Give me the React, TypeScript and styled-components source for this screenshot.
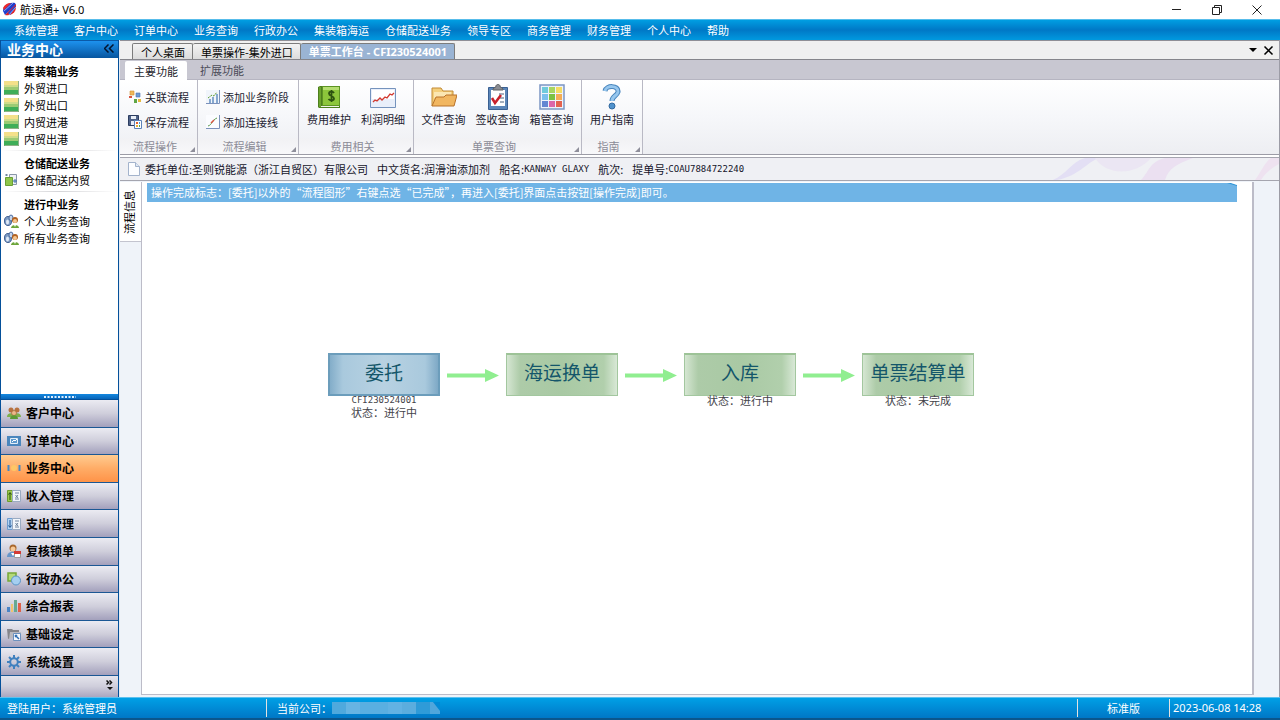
import React from 'react';
import styled, { createGlobalStyle, css } from 'styled-components';

const GlobalStyle = createGlobalStyle`
  * { box-sizing: border-box; }
  body { margin: 0; background: #fff; }
  body, button {
    font-family: 'Noto Sans CJK SC', 'Noto Sans', sans-serif;
    font-size: 11px;
    line-height: 16px;
    color: #000;
  }
  button { margin: 0; padding: 0; border: 0; background: none; white-space: nowrap; cursor: pointer; }
  svg { display: block; flex: none; }
`;

const Shell = styled.div`
  display: flex;
  flex-direction: column;
  min-height: 100vh;
`;

/* ---------- window title and menu ---------- */

const TitleBar = styled.header`
  display: flex;
  align-items: center;
  height: 19px;
  padding: 0 3px 0 2px;
  gap: 3px;
`;

const AppTitle = styled.h1`
  flex: 1;
  margin: 0;
  font-family: 'Noto Sans', 'Noto Sans CJK SC', sans-serif;
  font-size: 11px;
  font-weight: 400;
`;

const WindowButton = styled.button`
  display: flex;
  align-items: center;
  justify-content: center;
  width: 40px;
  height: 18px;
`;

const WindowButtons = styled.div`
  display: flex;
`;

const MenuBar = styled.nav`
  display: flex;
  align-items: center;
  height: 21px;
  padding-left: 6px;
  border-top: 1px solid #58bdeb;
  background: linear-gradient(#009ee2, #0078c6 50%, #0099df);
`;

const MenuItem = styled.button`
  padding: 0 8px;
  color: #fff;
`;

const Body = styled.div`
  display: flex;
  flex: 1;
`;

/* ---------- sidebar ---------- */

const Sidebar = styled.aside`
  display: flex;
  flex-direction: column;
  flex: none;
  width: 119px;
  border: solid #04509a;
  border-width: 0 1px;
`;

const SideHeader = styled.div`
  display: flex;
  align-items: center;
  justify-content: space-between;
  height: 18px;
  padding: 0 4px 2px 6px;
  border-top: 1px solid #0a5aa8;
  background: linear-gradient(#1d92ee, #07559f);
`;

const SideTitle = styled.h2`
  margin: 0;
  font-size: 14px;
  font-weight: 700;
  color: #fff;
`;

const SideList = styled.div`
  flex: 1;
  padding-top: 5px;
`;

const SideGroup = styled.section`
  & + &::before {
    content: '';
    display: block;
    height: 1px;
    margin: 3px 0 4px;
    background: linear-gradient(90deg, #fff, #d5d5d8 50%, #fff);
  }
`;

const SideHeading = styled.h3`
  margin: 0;
  padding-left: 23px;
  font-size: 11px;
  font-weight: 700;
`;

const SideLink = styled.button`
  display: flex;
  align-items: center;
  gap: 5px;
  width: 100%;
  height: 17px;
  padding-left: 3px;
`;

const Splitter = styled.div`
  display: flex;
  justify-content: center;
  height: 6px;
  padding-top: 2px;
  border-bottom: 1px solid #04509a;
  background: linear-gradient(#1488e0, #0764b8);
`;

const NavStack = styled.div`
  display: grid;
  grid-auto-rows: 1fr;
  height: 276px;
`;

const NavButton = styled.button<{ $active?: boolean }>`
  display: flex;
  align-items: center;
  gap: 5px;
  padding-left: 6px;
  border-bottom: 1px solid #1b5794;
  font-size: 12px;
  font-weight: 700;
  background: linear-gradient(#ebebf2, #cfcedb 50%, #a3a0bc);
  ${p => p.$active && css`background: linear-gradient(#ffcb90, #ffac66 50%, #ff9348);`}
`;

const NavOverflow = styled.div`
  display: flex;
  justify-content: flex-end;
  height: 21px;
  padding: 4px 5px 0 0;
  background: linear-gradient(#e4e4ec, #cfcedb 50%, #a9a6c0);
`;

/* ---------- workspace ---------- */

const Main = styled.main`
  display: flex;
  flex-direction: column;
  flex: 1;
  min-width: 0;
  border-left: 1px solid #e6ebf2;
  border-right: 1px solid #9c9ca6;
`;

const DocTabs = styled.div`
  display: flex;
  align-items: flex-end;
  height: 20px;
  padding: 0 5px 0 12px;
  border-top: 1px solid #8f8f96;
  border-bottom: 1px solid #85858b;
  background: #f0f0f0;
`;

const DocTab = styled.button<{ $active?: boolean }>`
  height: 16px;
  padding: 0 7px 0 8px;
  line-height: 14px;
  border: 1px solid #7c7c7c;
  border-bottom: 0;
  border-left-width: 0;
  border-radius: 2px 2px 0 0;
  background: linear-gradient(#f3f3f3, #dcdcdc);
  &:first-child { border-left-width: 1px; }
  ${p => p.$active && css`
    background: #9ab4d4;
    color: #fff;
    font-weight: 700;
    font-family: 'Noto Sans', 'Noto Sans CJK SC', sans-serif;
  `}
`;

const DocTools = styled.div`
  display: flex;
  align-items: center;
  gap: 6px;
  height: 18px;
  margin-left: auto;
  button { display: flex; }
`;

const RibbonTabs = styled.div`
  display: flex;
  align-items: flex-end;
  height: 20px;
  padding-left: 5px;
  border-bottom: 1px solid #b6b5c1;
  background: #c8c7d1;
`;

const RibbonTab = styled.button<{ $active?: boolean }>`
  height: 18px;
  padding: 0 9px;
  color: #4b4b58;
  ${p => p.$active && css`
    height: 19px;
    margin-bottom: -1px;
    margin-right: 4px;
    border-radius: 2px 2px 0 0;
    background: #fff;
    color: #1d1d2c;
  `}
`;

const Ribbon = styled.div`
  display: flex;
  height: 75px;
  border-bottom: 1px solid #9c9ca6;
  background: linear-gradient(#fff, #f6f7fa 50%, #edeef2);
`;

const RibbonGroup = styled.section<{ $width: number }>`
  display: flex;
  flex-direction: column;
  flex: none;
  width: ${p => p.$width}px;
  border-right: 1px solid #b9b9c4;
`;

const RibbonItems = styled.div<{ $small?: boolean }>`
  display: flex;
  flex: 1;
  justify-content: ${p => (p.$small ? 'flex-start' : 'center')};
  ${p => p.$small && css`
    flex-direction: column;
    gap: 9px;
    padding: 9px 0 0 8px;
  `}
`;

const RibbonLabel = styled.div`
  display: flex;
  align-items: flex-end;
  height: 16px;
  color: #8b8b96;
  background: linear-gradient(#f1f1f4, #f8f8fa);
  span { flex: 1; text-align: center; }
  svg { margin: 0 2px 2px 0; }
`;

const SmallTool = styled.button`
  display: flex;
  align-items: center;
  gap: 3px;
  color: #1b1b30;
`;

const LargeTool = styled.button`
  display: flex;
  flex-direction: column;
  align-items: center;
  gap: 1px;
  width: 54px;
  padding-top: 4px;
  color: #1b1b30;
`;

const InfoBar = styled.div`
  display: flex;
  align-items: center;
  gap: 9px;
  height: 24px;
  margin-top: 2px;
  padding-left: 8px;
  border-top: 1px solid #a5a5af;
  border-bottom: 1px solid #a5a5af;
  background: #eff0f4;
  white-space: nowrap;
`;

const InfoItem = styled.span`
  display: flex;
  align-items: center;
  height: 16px;
  color: #14142a;
  &:first-of-type { margin-left: -4px; }
`;

const Mono = styled.span`
  font-family: 'DejaVu Sans Mono', monospace;
  font-size: 9px;
  line-height: 12px;
`;

const InfoArt = styled.svg`
  margin-left: auto;
`;

const Work = styled.div`
  display: flex;
  flex: 1;
  padding: 1px 25px 2px 0;
  background: #eff3f9;
`;

const SideTabs = styled.div`
  flex: none;
  width: 21px;
`;

const SideTab = styled.button`
  display: flex;
  align-items: center;
  justify-content: center;
  width: 21px;
  height: 60px;
  padding-right: 4px;
  background: #fff;
  border-bottom: 1px solid #c3c4cf;
  span { writing-mode: vertical-rl; text-orientation: sideways; transform: rotate(180deg); }
`;

const Canvas = styled.div`
  flex: 1;
  min-width: 0;
  padding: 1px 15px 0 5px;
  border: solid #bcbcc8;
  border-width: 0 2px 1px 1px;
  background: #fff;
`;

const Banner = styled.div`
  display: flex;
  justify-content: space-between;
  height: 19px;
  padding-left: 4px;
  line-height: 18px;
  color: #fff;
  background: #6fb4e6;
`;

const Flow = styled.div`
  display: flex;
  align-items: flex-start;
  gap: 7px;
  padding: 151px 0 0 181px;
`;

const Step = styled.div`
  flex: none;
  width: 112px;
  text-align: center;
`;

const StepBox = styled.button<{ $current?: boolean }>`
  display: block;
  width: 100%;
  height: 43px;
  padding-bottom: 6px;
  font-size: 19px;
  font-weight: 400;
  color: #14566a;
  border: 1px solid #a3c79f;
  border-top: 2px solid #9dc397;
  background: linear-gradient(90deg, #d5e6d2, #adcba8 12%, #a9c9a4 50%, #b1cfac 88%, #d8e8d6);
  ${p => p.$current && css`
    border: 2px solid #6c9dbb;
    background: linear-gradient(90deg, #83adc9, #a9c9dd 12%, #b8d2e2 50%, #a9c9dd 88%, #7ea9c6);
  `}
`;

const StepNote = styled.div`
  display: flex;
  flex-direction: column;
  align-items: center;
  margin-top: -2px;
  line-height: 12px;
  color: #44444a;
`;

const Arrow = styled.svg`
  margin-top: 16px;
`;

/* ---------- status bar ---------- */

const StatusBar = styled.footer`
  display: flex;
  align-items: center;
  height: 23px;
  border-top: 1px solid #5cc0ee;
  border-bottom: 2px solid #0b568c;
  background: linear-gradient(#00a0e6, #0077c6);
  color: #fff;
`;

const StatusCell = styled.div<{ $width?: number; $pad: number }>`
  display: flex;
  align-items: center;
  height: 18px;
  padding-left: ${p => p.$pad}px;
  ${p => (p.$width ? css`flex: none; width: ${p.$width}px;` : css`flex: 1;`)}
  & + & { border-left: 1px solid #e2e2e2; }
`;

const Clock = styled.time`
  font-family: 'Noto Sans', sans-serif;
`;

/* ---------- icons ---------- */

const Logo = () => (
  <svg width="15" height="15" viewBox="0 0 15 15">
    <path d="M1 9C1 4 6 0 13 1l1 2L3 13z" fill="#1d3fd0" />
    <path d="M3 13C7 14 14 12 14 5V2z" fill="#e32222" />
    <path d="M1 6C3 2 6 1 9 1L2 8z" fill="#ee2a2a" />
    <path d="M6 11l7-7 1 1-6 8z" fill="#2347d8" />
    <path d="M2 9 11 1M6 14l8-9" stroke="#fff" strokeWidth=".5" />
  </svg>
);

const Strip = () => (
  <svg width="15" height="14" viewBox="0 0 15 14">
    <path fill="#f4e08a" d="M0 0h15v4H0z" /><path fill="#cfdc8a" d="M0 4h15v2H0z" />
    <path fill="#9ccb74" d="M0 6h15v3H0z" /><path fill="#3fae58" d="M0 9h15v5H0z" />
    <path d="M.5 13.500h14V0" stroke="#8fb187" fill="none" />
  </svg>
);

const BoxIcon = () => (
  <svg width="15" height="14" viewBox="0 0 15 14" fill="none">
    <path d="M5.500 1.500h7v10h-7z" fill="#eef1f5" stroke="#8996a8" />
    <path d="M1.500 4.500h7v8h-7z" fill="#8fc64a" stroke="#6a9f34" />
    <path d="M11 6v4m-2-2h4" stroke="#3d6eab" /><path d="M1 2h3M2.500 1v2" stroke="#7088a0" />
  </svg>
);

const Finder = () => (
  <svg width="15" height="14" viewBox="0 0 15 14">
    <ellipse cx="4" cy="7" rx="3.500" ry="4.500" fill="#7e9cc4" stroke="#3f5f92" />
    <ellipse cx="7" cy="4" rx="2" ry="3" fill="#c3d3ea" stroke="#4c6c9f" />
    <ellipse cx="3.500" cy="8" rx="1.500" ry="2.500" fill="#dfe9f6" />
    <circle cx="11" cy="6" r="3" fill="#b3611f" /><circle cx="11" cy="7" r="2" fill="#f5c793" />
    <path d="M7 14c0-4 8-4 8 0z" fill="#6da63b" /><path d="M10 11l1 2 1-2z" fill="#fff" />
  </svg>
);

const navIcons: Record<string, React.ReactNode> = {
  people: <>
    <circle cx="4" cy="4" r="2.500" fill="#b8723f" /><circle cx="10" cy="4" r="2.500" fill="#b8723f" />
    <path d="M0 11c0-5 7-5 7 0zm7 0c0-5 7-5 7 0z" fill="#7daf4b" />
    <circle cx="7" cy="7" r="2.500" fill="#ecb98a" stroke="#9c6433" strokeWidth=".7" /><path d="M3 13c0-5 8-5 8 0z" fill="#5c9a37" />
  </>,
  order: <>
    <path fill="#4a86bd" d="M0 2h14v10H0z" /><path fill="#5e9acd" stroke="#e3eef8" d="M3.500 4.500h7v5h-7z" />
    <path d="M5 8l2-2 1 1 2-2" stroke="#fff" fill="none" />
  </>,
  business: <>
    <path d="M1.500 4v6M12.500 4v6" stroke="#4787c4" strokeWidth="2" /><circle cx="7" cy="7" r="3" fill="#ffc766" />
  </>,
  income: <>
    <path fill="#9fca4f" stroke="#6d9a2e" d="M.5 1.500h5v11h-5z" /><path fill="#f2f6fb" stroke="#9aabc2" d="M5.500 1.500h8v11h-8z" />
    <path d="M3 11V4M1.500 5.500L3 3.500l1.500 2" stroke="#24500c" fill="none" /><path d="M8 4h4M8 10h4M8.500 6l2.500 3m0-3l-2.500 3" stroke="#4d6888" strokeWidth=".8" />
  </>,
  expense: <>
    <path fill="#b4d4f3" stroke="#6d9ccf" d="M.5 1.500h5v11h-5z" /><path fill="#f2f6fb" stroke="#9aabc2" d="M5.500 1.500h8v11h-8z" />
    <path d="M3 3v7M1.500 8.500l1.500 2 1.500-2" stroke="#1d5494" fill="none" /><path d="M8 4h4M8 10h4M8.500 6l2.500 3m0-3l-2.500 3" stroke="#4d6888" strokeWidth=".8" />
  </>,
  lock: <>
    <circle cx="6" cy="4" r="3.500" fill="#a8672d" /><circle cx="6" cy="5" r="2.500" fill="#f6c998" />
    <path d="M0 13c0-7 11-7 11 0z" fill="#6796c9" /><path d="M4 9l2 3 2-3z" fill="#fff" />
    <path fill="#fff" stroke="#9b9b9b" d="M7.500 7.500h6v6h-6z" /><path fill="#d33b35" d="M7 7h7v3H7z" />
  </>,
  office: <>
    <path fill="#b4d97a" stroke="#77a737" strokeWidth="1.500" d="M1 1h8v8H1z" /><circle cx="9" cy="8.500" r="4.500" fill="#a5cff0" stroke="#5a94c7" />
  </>,
  report: <>
    <path fill="#4a84c6" d="M0 8h3v5H0z" /><path fill="#f0c46d" d="M4 5h2v8H4z" />
    <path fill="#67a992" d="M7 1h3v12H7z" /><path fill="#e06047" d="M11 4h3v9h-3z" />
  </>,
  base: <>
    <path fill="#85858b" d="M0 2h5l1 1h6v4L1 12z" /><path fill="#b9b9bf" d="M3 5h11v4L2 12z" />
    <path fill="#f6f9fd" stroke="#6d91be" d="M6.500 6.500h7v7h-7z" /><path d="M8 8l4 4m-2-4l-2 2" stroke="#2e6db3" strokeWidth="1.500" />
  </>,
  gear: <>
    <path d="M7 0v3M7 11v3M0 7h3M11 7h3M2 2l2 2M10 10l2 2M2 12l2-2M10 4l2-2" stroke="#3f80bf" strokeWidth="2" />
    <circle cx="7" cy="7" r="3.800" fill="none" stroke="#3f80bf" strokeWidth="2" />
  </>,
};

const smallIcons: Record<string, React.ReactNode> = {
  link: <>
    <path fill="#f0b95a" stroke="#d08d32" strokeWidth=".6" d="M2 1h4v4H2z" /><path fill="#d8543f" d="M1 6h3v2H1z" />
    <path fill="#6d9bd4" stroke="#4d73b4" strokeWidth=".6" d="M8 3h4v4H8z" /><path fill="#5fa646" d="M6 9h3v4H6z" /><path fill="#e8b93d" d="M10 9h3v3h-3z" />
  </>,
  save: <>
    <path fill="#4f6288" stroke="#2c3d60" d="M.5.500h10v10H.500z" /><path fill="#e9eef6" d="M3 1h5v3H3zM3 6h5v4H3z" />
    <path fill="#fff" stroke="#5d83b8" d="M6.500 5.500h7v8h-7z" /><path fill="#e2622d" d="M8 7h2v2H8z" /><path fill="#4c9ad9" d="M11 7h1v2h-1z" /><path fill="#e8b22e" d="M8 10h2v2H8z" /><path fill="#4ea64a" d="M11 10h1v2h-1z" />
  </>,
  stage: <>
    <path fill="#f1f5fb" d="M0 0h13v13H0z" /><path d="M13.500 0v13.500H0" stroke="#7b91bb" fill="none" />
    <path fill="#86a8cf" d="M3 9h2v4H3zM6 7h2v6H6zM10 4h2v9h-2z" />
    <path d="M2 8l4-3 2 1 3-4" stroke="#5b9a2f" fill="none" strokeDasharray="2 1" />
  </>,
  line: <>
    <path fill="#fbfcff" d="M0 0h13v13H0z" /><path d="M13.500 0v13.500H0" stroke="#7b91bb" fill="none" />
    <path d="M2 11c4-1 4-6 9-8" stroke="#5a9a4c" fill="none" /><path d="M5 8l3-3" stroke="#d8543f" strokeWidth="1.500" />
  </>,
};

const cells = ['#6fcadb', '#a9d65f', '#f4dc63', '#7bc0ec', '#7cc142', '#f4ad55', '#6486d2', '#dc66a9', '#e4614f'];

const largeIcons: Record<string, React.ReactNode> = {
  money: <>
    <path fill="#4d7f1d" d="M2 3l2-1h20v22H3l-1-1z" />
    <path fill="#8cc63b" stroke="#5d9423" d="M6.500 2.500h17v19h-17z" />
    <path fill="#b5dd70" d="M7 3h16v3H7z" /><path fill="#6ba42c" d="M3 3h2v20H3z" />
    <path fill="#eef4e2" d="M5 22h18v1H5z" />
    <path d="M18 9c-1-2-5-2-5 .500 0 3 5 2 5 5 0 2.500-4 2.500-5.500.500M15.500 6v12" fill="none" stroke="#2c5210" strokeWidth="1.800" />
  </>,
  trend: <>
    <path fill="#e9effa" stroke="#7593bd" d="M.5 4.500h25v19H.500z" /><path fill="#fff" d="M2 6h22v9H2z" />
    <path d="M3 18l2-2 2 1 3-3 2 2 3-3 2 1 3-4 2 1 2-2" fill="none" stroke="#d23a30" strokeWidth="1.300" />
  </>,
  folder: <>
    <path fill="#f4cf7c" stroke="#c28a35" d="M1 22V4h9l2 3h10v4" /><path fill="#fbe6b1" d="M3 8h17v6H3z" />
    <path fill="#f1b660" stroke="#b8722a" d="M1 22l4-9h8l2-2h11l-3 11z" />
  </>,
  check: <>
    <path fill="#5b86b9" stroke="#3a6092" d="M3.500 3.500h19v22h-19z" /><path fill="#fff" d="M6 6h14v16H6z" />
    <path fill="#8b8d92" stroke="#5e6064" d="M8 5c1-2 3-1 3-3 0-2 4-2 4 0 0 2 2 1 3 3v1H8z" />
    <path d="M14 10h5M15 14h4M15 18h4" stroke="#8795a8" strokeWidth="1.500" /><path d="M7 14l3 5 6-8" stroke="#c8202a" strokeWidth="2.500" fill="none" />
  </>,
  grid: <>
    <path fill="#eef2fb" stroke="#7c96c4" strokeWidth="1.500" d="M1 1h24v24H1z" />
    {cells.map((c, i) => <rect key={c} x={3 + (i % 3) * 7} y={3 + Math.floor(i / 3) * 7} width="6" height="6" fill={c} />)}
  </>,
  help: <>
    <path d="M6 7c1-6 14-6 13 1-1 4-6 4-6 9" stroke="#4a86bd" strokeWidth="5" fill="none" />
    <path d="M6 7c1-6 14-6 13 1-1 4-6 4-6 9" stroke="#97c7ee" strokeWidth="3" fill="none" />
    <circle cx="13" cy="22" r="3" fill="#4f92cd" stroke="#33699f" />
  </>,
};

const Launcher = () => <svg width="5" height="5" viewBox="0 0 5 5"><path d="M5 0v5H0z" fill="#8f8f9b" /></svg>;

/* ---------- data ---------- */

const menus = ['系统管理', '客户中心', '订单中心', '业务查询', '行政办公', '集装箱海运', '仓储配送业务', '领导专区', '商务管理', '财务管理', '个人中心', '帮助'];

const sideGroups = [
  { title: '集装箱业务', icon: Strip, items: ['外贸进口', '外贸出口', '内贸进港', '内贸出港'] },
  { title: '仓储配送业务', icon: BoxIcon, items: ['仓储配送内贸'] },
  { title: '进行中业务', icon: Finder, items: ['个人业务查询', '所有业务查询'] },
];

const navs = [
  ['people', '客户中心'], ['order', '订单中心'], ['business', '业务中心'], ['income', '收入管理'], ['expense', '支出管理'],
  ['lock', '复核锁单'], ['office', '行政办公'], ['report', '综合报表'], ['base', '基础设定'], ['gear', '系统设置'],
];

const ribbon = [
  { label: '流程操作', width: 78, small: true, tools: [['link', '关联流程'], ['save', '保存流程']] },
  { label: '流程编辑', width: 101, small: true, tools: [['stage', '添加业务阶段'], ['line', '添加连接线']] },
  { label: '费用相关', width: 115, tools: [['money', '费用维护'], ['trend', '利润明细']] },
  { label: '单票查询', width: 168, tools: [['folder', '文件查询'], ['check', '签收查询'], ['grid', '箱管查询']] },
  { label: '指南', width: 61, tools: [['help', '用户指南']] },
];

const steps = [
  { name: '委托', notes: ['CFI230524001', '状态：进行中'], current: true },
  { name: '海运换单', notes: [] },
  { name: '入库', notes: ['状态：进行中'] },
  { name: '单票结算单', notes: ['状态：未完成'] },
];

const mosaic = ['#4fa9dd', '#66b4e3', '#5aafe1', '#5aafe1', '#62b2e3', '#5badde', '#2f9bd8', '#4fa6dc'];

export default function App() {
  return (
    <Shell>
      <GlobalStyle />
      <TitleBar>
        <Logo />
        <AppTitle>航运通+ V6.0</AppTitle>
        <WindowButtons>
          <WindowButton aria-label="最小化"><svg width="10" height="10"><path d="M0 4.500h9" stroke="#222" /></svg></WindowButton>
          <WindowButton aria-label="还原"><svg width="10" height="10" fill="none" stroke="#222"><path d="M.5 2.500h7v7h-7zM2.500 2V.500h7v7H8" /></svg></WindowButton>
          <WindowButton aria-label="关闭"><svg width="10" height="10" stroke="#222"><path d="M.5.500l9 9m0-9l-9 9" /></svg></WindowButton>
        </WindowButtons>
      </TitleBar>
      <MenuBar>{menus.map(m => <MenuItem key={m}>{m}</MenuItem>)}</MenuBar>

      <Body>
        <Sidebar>
          <SideHeader>
            <SideTitle>业务中心</SideTitle>
            <svg width="10" height="9" fill="none" stroke="#04142e" strokeWidth="1.500"><path d="M4.500.500l-4 4 4 4M9.500.500l-4 4 4 4" /></svg>
          </SideHeader>
          <SideList>
            {sideGroups.map(({ title, icon: Icon, items }) => (
              <SideGroup key={title}>
                <SideHeading>{title}</SideHeading>
                {items.map(i => <SideLink key={i}><Icon />{i}</SideLink>)}
              </SideGroup>
            ))}
          </SideList>
          <Splitter><svg width="32" height="2"><path d="M0 1h32" stroke="#dff0ff" strokeWidth="2" strokeDasharray="2 1.500" /></svg></Splitter>
          <NavStack>
            {navs.map(([icon, label]) => (
              <NavButton key={label} $active={icon === 'business'}>
                <svg width="14" height="14" viewBox="0 0 14 14">{navIcons[icon]}</svg>{label}
              </NavButton>
            ))}
          </NavStack>
          <NavOverflow>
            <svg width="7" height="12" fill="none" stroke="#111" strokeWidth="1.500"><path d="M.5.500l2 2-2 2M3.500.500l2 2-2 2" /><path d="M1 7h6L4 10z" fill="#111" stroke="none" /></svg>
          </NavOverflow>
        </Sidebar>

        <Main>
          <DocTabs>
            <DocTab>个人桌面</DocTab>
            <DocTab>单票操作-集外进口</DocTab>
            <DocTab $active>单票工作台 - CFI230524001</DocTab>
            <DocTools>
              <button aria-label="窗口列表"><svg width="8" height="4"><path d="M0 0h8L4 4z" /></svg></button>
              <button aria-label="关闭标签"><svg width="11" height="9" stroke="#000" strokeWidth="1.500"><path d="M1.500.500l8 8m0-8l-8 8" /></svg></button>
            </DocTools>
          </DocTabs>
          <RibbonTabs>
            <RibbonTab $active>主要功能</RibbonTab>
            <RibbonTab>扩展功能</RibbonTab>
          </RibbonTabs>
          <Ribbon>
            {ribbon.map(g => (
              <RibbonGroup key={g.label} $width={g.width}>
                <RibbonItems $small={g.small}>
                  {g.tools.map(([icon, label]) => g.small
                    ? <SmallTool key={label}><svg width="14" height="14" viewBox="0 0 14 14">{smallIcons[icon]}</svg>{label}</SmallTool>
                    : <LargeTool key={label}><svg width="26" height="26" viewBox="0 0 26 26">{largeIcons[icon]}</svg>{label}</LargeTool>)}
                </RibbonItems>
                <RibbonLabel><span>{g.label}</span><Launcher /></RibbonLabel>
              </RibbonGroup>
            ))}
          </Ribbon>
          <InfoBar>
            <svg width="12" height="14"><path d="M.5.500h7l4 4v9H.500z" fill="#fcfdff" stroke="#a3b3cc" /><path d="M7.500.500v4h4" fill="#dfe8f4" stroke="#a3b3cc" /></svg>
            <InfoItem>委托单位:圣则锐能源（浙江自贸区）有限公司</InfoItem>
            <InfoItem>中文货名:润滑油添加剂</InfoItem>
            <InfoItem>船名:<Mono>KANWAY GLAXY</Mono></InfoItem>
            <InfoItem>航次:</InfoItem>
            <InfoItem>提单号:<Mono>COAU7884722240</Mono></InfoItem>
            <InfoArt width="234" height="22">
              <path d="M8 22C22 16 26 4 40 0h14C42 4 34 18 12 22z" fill="#e3dff4" />
              <path d="M50 0c12 18 40 18 56 0z" fill="#ebe6f3" />
              <path d="M96 22c8-8 8-18 24-22h28c-16 6-24 10-28 22z" fill="#ebe0f1" />
              <path d="M210 22c6-8 10-18 16-22h8v6c-8 4-14 10-18 16z" fill="#eee2f0" />
            </InfoArt>
          </InfoBar>
          <Work>
            <SideTabs><SideTab><span>流程信息</span></SideTab></SideTabs>
            <Canvas>
              <Banner>
                操作完成标志：[委托]以外的“流程图形”右键点选“已完成”，再进入[委托]界面点击按钮[操作完成]即可。
                <svg width="10" height="3"><path d="M0 0h4l6 2v1z" fill="#2f94d6" /><path d="M4 0h6v2z" fill="#fff" /></svg>
              </Banner>
              <Flow>
                {steps.map((s, i) => (
                  <React.Fragment key={s.name}>
                    {i > 0 && <Arrow width="52" height="13"><path d="M0 4.500h38V0l14 6.500L38 13V8.500H0z" fill="#90ee90" /></Arrow>}
                    <Step>
                      <StepBox $current={s.current}>{s.name}</StepBox>
                      <StepNote>{s.notes.map(n => n.startsWith('CFI') ? <Mono key={n}>{n}</Mono> : <span key={n}>{n}</span>)}</StepNote>
                    </Step>
                  </React.Fragment>
                ))}
              </Flow>
            </Canvas>
          </Work>
        </Main>
      </Body>

      <StatusBar>
        <StatusCell $width={266} $pad={7}>登陆用户：系统管理员</StatusCell>
        <StatusCell $pad={10}>
          当前公司：
          <svg width="108" height="12">
            {mosaic.map((c, i) => <rect key={i} x={i * 14} width="14" height="12" fill={c} />)}
            <path d="M101 0h7v9z" fill="#008ad6" />
          </svg>
        </StatusCell>
        <StatusCell $width={92} $pad={29}>标准版</StatusCell>
        <StatusCell $width={111} $pad={3}><Clock dateTime="2023-06-08T14:28">2023-06-08 14:28</Clock></StatusCell>
      </StatusBar>
    </Shell>
  );
}
